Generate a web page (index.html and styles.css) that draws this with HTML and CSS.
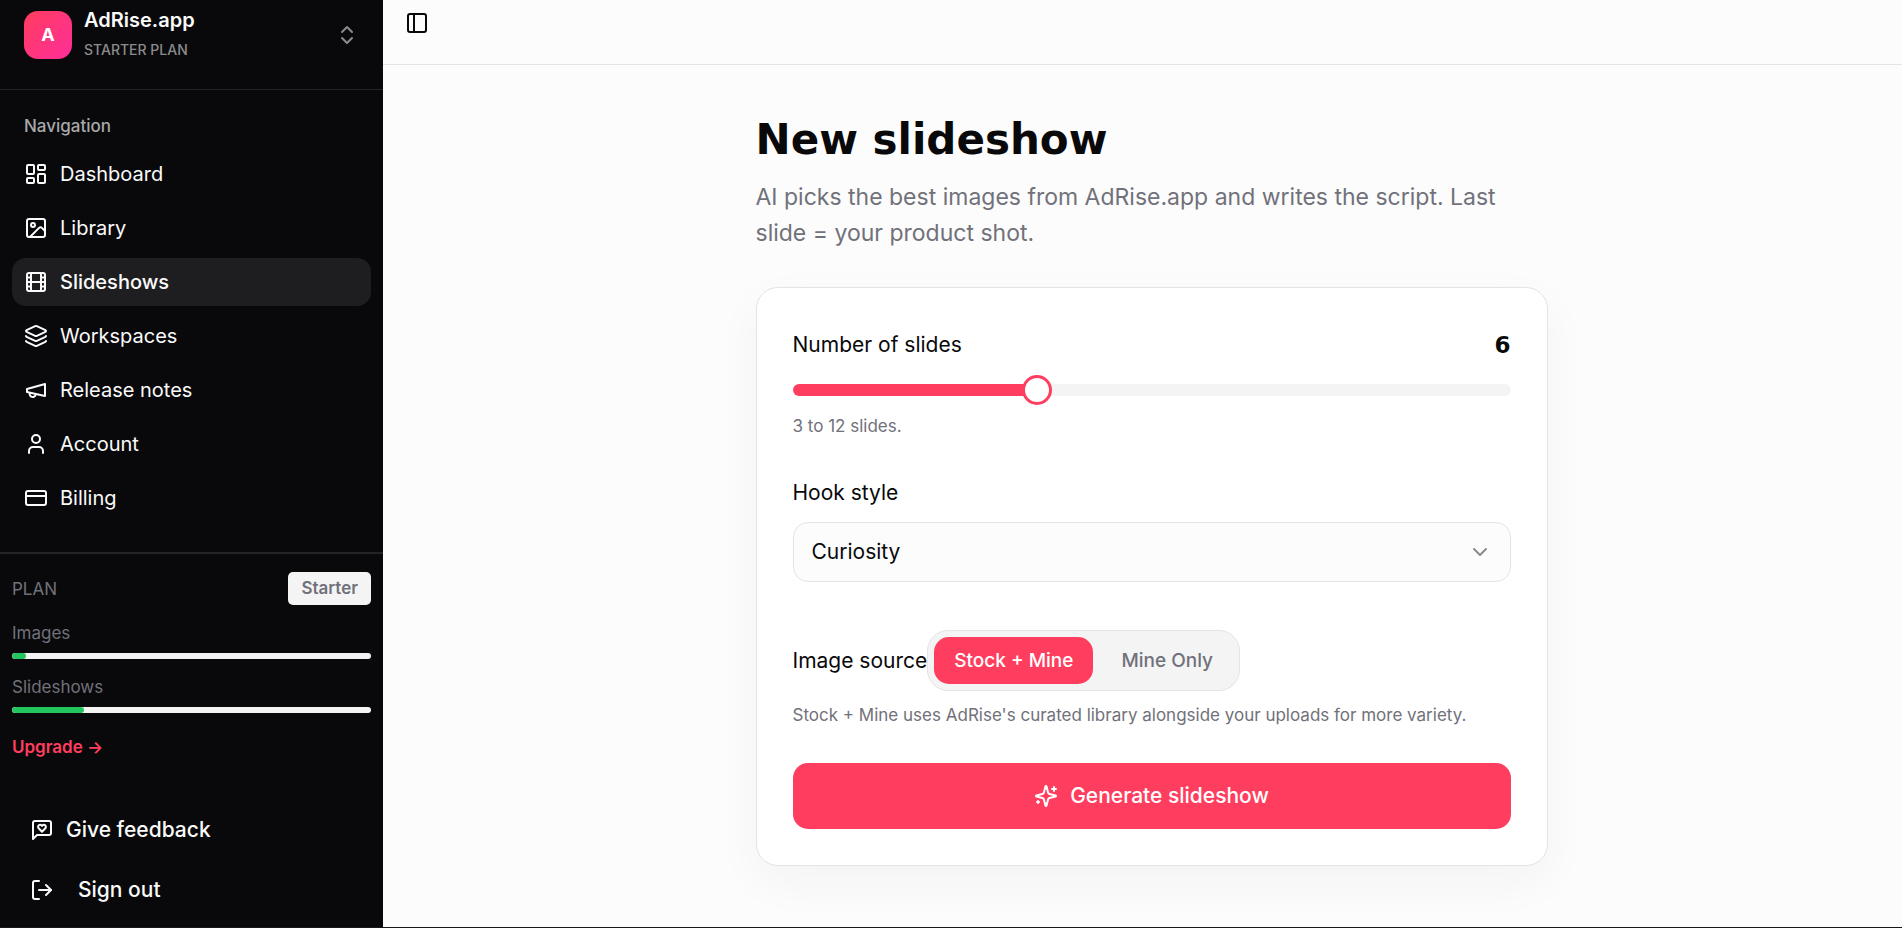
FILE: index.html
```html
<!DOCTYPE html>
<html lang="en">
<head>
<meta charset="utf-8">
<meta name="viewport" content="width=device-width, initial-scale=1">
<title>New slideshow – AdRise.app</title>
<link rel="stylesheet" href="styles.css">
</head>
<body>
<div class="app">
  <aside class="sidebar">
    <button class="workspace" type="button">
      <span class="avatar">A</span>
      <span class="workspace-text">
        <span class="workspace-name">AdRise.app</span>
        <span class="workspace-plan">STARTER PLAN</span>
      </span>
      <svg class="icon muted" viewBox="0 0 24 24"><path d="m7 15 5 5 5-5"/><path d="m7 9 5-5 5 5"/></svg>
    </button>

    <nav class="nav" aria-label="Navigation">
      <div class="nav-label">Navigation</div>
      <a class="nav-item" href="#"><svg class="icon" viewBox="0 0 24 24"><rect width="7" height="9" x="3" y="3" rx="1"/><rect width="7" height="5" x="14" y="3" rx="1"/><rect width="7" height="9" x="14" y="12" rx="1"/><rect width="7" height="5" x="3" y="16" rx="1"/></svg>Dashboard</a>
      <a class="nav-item" href="#"><svg class="icon" viewBox="0 0 24 24"><rect width="18" height="18" x="3" y="3" rx="2"/><circle cx="9" cy="9" r="2"/><path d="m21 15-3.086-3.086a2 2 0 0 0-2.828 0L6 21"/></svg>Library</a>
      <a class="nav-item active" href="#" aria-current="page"><svg class="icon" viewBox="0 0 24 24"><rect width="18" height="18" x="3" y="3" rx="2"/><path d="M7 3v18M3 7.500h4M3 12h18M3 16.500h4M17 3v18M17 7.500h4M17 16.500h4"/></svg>Slideshows</a>
      <a class="nav-item" href="#"><svg class="icon" viewBox="0 0 24 24"><path d="M12.830 2.180a2 2 0 0 0-1.660 0L2.600 6.080a1 1 0 0 0 0 1.830l8.580 3.910a2 2 0 0 0 1.660 0l8.580-3.900a1 1 0 0 0 0-1.830z"/><path d="M2 12a1 1 0 0 0 .58.910l8.600 3.910a2 2 0 0 0 1.650 0l8.580-3.900A1 1 0 0 0 22 12"/><path d="M2 17a1 1 0 0 0 .58.910l8.600 3.910a2 2 0 0 0 1.650 0l8.580-3.900A1 1 0 0 0 22 17"/></svg>Workspaces</a>
      <a class="nav-item" href="#"><svg class="icon" viewBox="0 0 24 24"><path d="m3 11 18-5v12L3 14v-3z"/><path d="M11.600 16.800a3 3 0 1 1-5.800-1.600"/></svg>Release notes</a>
      <a class="nav-item" href="#"><svg class="icon" viewBox="0 0 24 24"><path d="M19 21v-2a4 4 0 0 0-4-4H9a4 4 0 0 0-4 4v2"/><circle cx="12" cy="7" r="4"/></svg>Account</a>
      <a class="nav-item" href="#"><svg class="icon" viewBox="0 0 24 24"><rect width="20" height="14" x="2" y="5" rx="2"/><path d="M2 10h20"/></svg>Billing</a>
    </nav>

    <section class="plan">
      <div class="plan-head"><span>PLAN</span><span class="badge">Starter</span></div>
      <div class="usage">
        <span>Images</span>
        <div class="meter"><div class="meter-fill" style="width:4%"></div></div>
      </div>
      <div class="usage">
        <span>Slideshows</span>
        <div class="meter"><div class="meter-fill" style="width:20%"></div></div>
      </div>
      <a class="upgrade" href="#">Upgrade →</a>
    </section>

    <div class="side-foot">
      <button class="foot-item" type="button"><svg class="icon" viewBox="0 0 24 24"><path d="M21 15a2 2 0 0 1-2 2H7l-4 4V5a2 2 0 0 1 2-2h14a2 2 0 0 1 2 2z"/><path d="M12 13.800 8.700 10.300a2.100 2.100 0 0 1 .1-3c.9-.7 2.200-.5 3.200.6 1-1.100 2.300-1.300 3.200-.6a2.100 2.100 0 0 1 .1 3z"/></svg>Give feedback</button>
      <button class="foot-item wide" type="button"><svg class="icon" viewBox="0 0 24 24"><path d="M9 21H5a2 2 0 0 1-2-2V5a2 2 0 0 1 2-2h4"/><path d="m16 17 5-5-5-5"/><path d="M21 12H9"/></svg>Sign out</button>
    </div>
  </aside>

  <div class="page">
    <header class="topbar">
      <button class="toggle-sidebar" type="button" aria-label="Toggle sidebar"><svg class="icon" viewBox="0 0 24 24"><rect width="18" height="18" x="3" y="3" rx="2"/><path d="M9 3v18"/></svg></button>
    </header>
    <main class="main">
      <div class="content">
        <h1 class="title">New slideshow</h1>
        <p class="lead">AI picks the best images from AdRise.app and writes the script. Last slide = your product shot.</p>
        <form class="card">
          <div class="field">
            <div class="field-head"><label for="count">Number of slides</label><output class="count" for="count">6</output></div>
            <input class="range" id="count" type="range" min="3" max="12" value="6">
            <p class="hint">3 to 12 slides.</p>
          </div>
          <div class="field hook">
            <label for="hook">Hook style</label>
            <div class="select-wrap">
              <select class="select" id="hook"><option>Curiosity</option></select>
              <svg class="icon chevron" viewBox="0 0 24 24"><path d="m6 9 6 6 6-6"/></svg>
            </div>
          </div>
          <div class="field source">
            <div class="source-row">
              <span id="source-label">Image source</span>
              <div class="segmented" role="group" aria-labelledby="source-label">
                <button class="segment selected" type="button" aria-pressed="true">Stock + Mine</button>
                <button class="segment" type="button" aria-pressed="false">Mine Only</button>
              </div>
            </div>
            <p class="hint">Stock + Mine uses AdRise's curated library alongside your uploads for more variety.</p>
          </div>
          <button class="generate" type="button"><svg class="icon" viewBox="0 0 24 24"><path d="M9.937 15.500A2 2 0 0 0 8.500 14.063l-6.135-1.582a.5.5 0 0 1 0-.962L8.500 9.936A2 2 0 0 0 9.937 8.500l1.582-6.135a.5.5 0 0 1 .963 0L14.063 8.500A2 2 0 0 0 15.500 9.937l6.135 1.581a.5.5 0 0 1 0 .964L15.500 14.063a2 2 0 0 0-1.437 1.437l-1.582 6.135a.5.5 0 0 1-.963 0z"/><path d="M20 3v4M22 5h-4M4 17v2M5 18H3"/></svg>Generate slideshow</button>
        </form>
      </div>
    </main>
  </div>
</div>
</body>
</html>
```

FILE: styles.css
```css
:root {
  --ink: #09090b;
  --gray: #71717a;
  --line: #e4e4e7;
  --accent: #ff3d5e;
  --soft: #f4f4f5;
}

* { box-sizing: border-box; }

body {
  margin: 0;
  font: 20px/30px Inter, "Liberation Sans", sans-serif;
  color: var(--ink);
  background: #fcfcfc;
}

button, select { font: inherit; color: inherit; }
button { border: 0; background: none; padding: 0; cursor: pointer; }
a { text-decoration: none; color: inherit; }
h1, p { margin: 0; }

.icon {
  width: 24px;
  height: 24px;
  flex: none;
  fill: none;
  stroke: currentColor;
  stroke-width: 2;
  stroke-linecap: round;
  stroke-linejoin: round;
}

.app {
  display: flex;
  min-height: 100vh;
  border-bottom: 1px solid #18181b;
}

/* Sidebar */
.sidebar {
  width: 383px;
  flex: none;
  display: flex;
  flex-direction: column;
  color: #fafafa;
  background: var(--ink);
}

.workspace {
  display: flex;
  align-items: center;
  gap: 12px;
  padding: 5px 24px 24px;
  text-align: left;
  border-bottom: 1px solid #242427;
}

.avatar {
  width: 48px;
  height: 48px;
  border-radius: 14px;
  display: grid;
  place-items: center;
  font-size: 18px;
  font-weight: 700;
  color: #fff;
  background: linear-gradient(135deg, #ff3d5e, #ff2e9a);
}

.workspace-text { flex: 1; display: grid; }
.workspace-name { font-weight: 600; }
.workspace-plan { font-size: 14px; font-weight: 500; color: #8b8b8e; }
.muted { color: #8b8b8e; }

.nav {
  display: flex;
  flex-direction: column;
  gap: 6px;
  padding: 12px 12px 30px;
  border-bottom: 2px solid #242427;
}

.nav-label {
  padding: 0 12px;
  margin-bottom: -6px;
  line-height: 48px;
  font-size: 17px;
  font-weight: 500;
  color: #a8a8aa;
}

.nav-item {
  display: flex;
  align-items: center;
  gap: 12px;
  padding: 9px 12px;
  border-radius: 14px;
}

.nav-item.active { background: #1e1e20; font-weight: 500; }

.plan {
  display: grid;
  gap: 16px;
  padding: 18px 12px 0;
  font-size: 17px;
  line-height: 24px;
  color: var(--gray);
}

.plan-head { display: flex; align-items: center; justify-content: space-between; }

.badge {
  padding: 4px 13px 5px;
  border-radius: 5px;
  font-weight: 600;
  line-height: 24px;
  background: var(--soft);
}

.usage { display: grid; gap: 8px; }
.meter { height: 6px; border-radius: 3px; overflow: hidden; background: var(--soft); }
.meter-fill { height: 100%; border-radius: 3px; background: #22c55e; }

.upgrade { margin-top: 6px; font-weight: 600; color: var(--accent); }

.side-foot {
  display: flex;
  flex-direction: column;
  gap: 12px;
  margin-top: auto;
  padding: 24px 12px 13px;
}

.foot-item {
  display: flex;
  align-items: center;
  gap: 12px;
  padding: 9px 18px;
  font-size: 21px;
  font-weight: 500;
}

.foot-item.wide { gap: 24px; }

/* Page */
.page { flex: 1; min-width: 0; }

.topbar {
  padding: 11px 22px 29px;
  border-bottom: 1px solid var(--line);
}

.toggle-sidebar { display: block; height: 24px; }

.main { padding: 48px 0 60px 18px; }
.content { max-width: 792px; margin: 0 auto; }

.title {
  font: 700 42px/54px "DejaVu Sans", sans-serif;
  margin-bottom: 12px;
}

.lead {
  font-size: 23px;
  line-height: 36px;
  color: var(--gray);
  margin-bottom: 36px;
}

.card {
  padding: 36px;
  font-size: 21px;
  border: 1px solid var(--line);
  border-radius: 22px;
  background: #fff;
  box-shadow: 0 16px 48px rgba(0, 0, 0, 0.04);
}

.field { display: grid; }

.field-head {
  display: flex;
  justify-content: space-between;
  align-items: center;
  line-height: 42px;
}

.count { font: 700 23px/42px "DejaVu Sans", sans-serif; }

.range {
  appearance: none;
  width: 100%;
  height: 30px;
  margin: 9px 0;
  background: none;
}

.range::-webkit-slider-runnable-track {
  height: 12px;
  border-radius: 6px;
  background: linear-gradient(to right, var(--accent) 34%, var(--soft) 34%);
}

.range::-webkit-slider-thumb {
  appearance: none;
  width: 30px;
  height: 30px;
  margin-top: -9px;
  border: 3px solid var(--accent);
  border-radius: 50%;
  background: #fff;
}

.hint { font-size: 17px; line-height: 24px; color: var(--gray); }

.hook { gap: 14px; margin-top: 40px; }
.select-wrap { display: grid; align-items: center; }

.select {
  grid-area: 1 / 1;
  appearance: none;
  width: 100%;
  height: 60px;
  padding: 0 18px;
  border: 1px solid var(--line);
  border-radius: 15px;
  background: #fcfcfc;
}

.chevron {
  grid-area: 1 / 1;
  justify-self: end;
  margin-right: 19px;
  color: #8b8b8e;
  pointer-events: none;
}

.source { gap: 12px; margin-top: 48px; }
.source-row { display: flex; align-items: center; }

.segmented {
  display: flex;
  padding: 6px;
  border: 1px solid var(--line);
  border-radius: 21px;
  background: var(--soft);
}

.segment {
  padding: 10px 20px;
  border-radius: 15px;
  font-size: 19px;
  line-height: 27px;
  font-weight: 500;
  color: var(--gray);
}

.segment + .segment { padding: 10px 20px 10px 28px; }
.segment.selected { color: #fff; background: var(--accent); }

.generate {
  display: flex;
  align-items: center;
  justify-content: center;
  gap: 12px;
  width: 100%;
  margin-top: 36px;
  padding: 18px;
  border-radius: 15px;
  font-weight: 500;
  color: #fff;
  background: var(--accent);
}
```
